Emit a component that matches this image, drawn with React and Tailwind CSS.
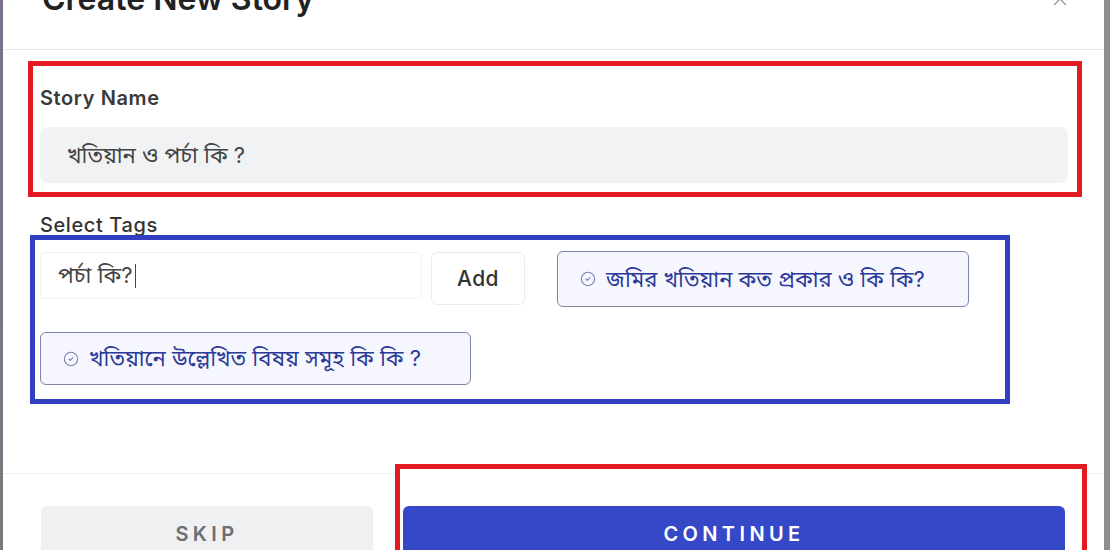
import { X, CircleCheck } from 'lucide-react';

const font = { fontFamily: 'Inter, "Noto Sans", "Noto Sans Bengali", sans-serif' };

function TagChip({ label, className }) {
    return (
        <div className={`flex items-center gap-[10px] pl-[22px] pr-3 border border-[#7c84aa] bg-[#f6f7fe] rounded-md ${className}`}>
            <CircleCheck size={16} strokeWidth={1.6} className="text-[#7880b0] shrink-0" />
            <span className="text-[22px] text-[#2b3a98] whitespace-nowrap">{label}</span>
        </div>
    );
}

export default function App() {
    return (
        <div className="w-[1110px] h-[550px] overflow-hidden flex bg-white" style={font}>
            {/* backdrop edge */}
            <div className="w-[3px] bg-gradient-to-b from-[#7b6f8c] to-[#7a7a7e] shrink-0" />

            <main className="flex-1 flex flex-col bg-white">
                {/* Header */}
                <header className="h-[50px] shrink-0 flex items-start justify-between border-b border-[#e8e9eb] pl-[39px] pr-[33px]">
                    <h1 className="-mt-[19px] text-[32px] leading-9 font-semibold text-[#222]">Create New Story</h1>
                    <X size={22} strokeWidth={1.5} className="-mt-[12px] text-[#9a9a9a]" />
                </header>

                {/* Body */}
                <div className="flex-1 flex flex-col pl-[25px] pr-[22px]">
                    {/* Story name */}
                    <section className="relative mt-[11px] border-[5px] border-[#e21b23] pl-[7px] pr-[9px] pt-[22px] pb-[9px]">
                        <label className="block text-[20px] leading-5 font-semibold tracking-[0.03em] text-[#3a3a3a]">Story Name</label>
                        <div className="mt-[19px] h-[56px] flex items-center pl-[27px] bg-[#f1f2f4] rounded-lg">
                            <span className="text-[22px] text-[#444]">খতিয়ান ও পর্চা কি ?</span>
                        </div>
                    </section>

                    {/* Tags */}
                    <label className="block mt-[18px] pl-[12px] text-[20px] leading-5 font-medium tracking-[0.03em] text-[#333]">Select Tags</label>
                    <section className="relative ml-[2px] w-[980px] border-[5px] border-[#3140c0] bg-white pl-[5px] pt-[12px] pb-[14px]">
                        <div className="flex flex-wrap items-start gap-x-8 gap-y-[25px]">
                            <div className="flex items-start gap-[9px]">
                                <div className="w-[382px] h-[47px] flex items-center pl-[17px] border border-[#f2f2f2] rounded-sm">
                                    <span className="text-[22px] text-[#444]">পর্চা কি?</span>
                                    <span className="ml-[3px] w-px h-[24px] bg-[#444]" />
                                </div>
                                <button className="w-[94px] h-[53px] border border-[#ececec] rounded-md text-[21px] font-medium tracking-[0.02em] text-[#333]">
                                    Add
                                </button>
                            </div>
                            <TagChip label="জমির খতিয়ান কত প্রকার ও কি কি?" className="w-[412px] h-[56px] -mt-px" />
                            <TagChip label="খতিয়ানে উল্লেখিত বিষয় সমূহ কি কি ?" className="w-[431px] h-[53px]" />
                        </div>
                    </section>
                </div>

                {/* Footer */}
                <footer className="h-[77px] shrink-0 flex items-start gap-[22px] border-t border-[#eeeff1] pl-[38px]">
                    <button className="mt-8 w-[332px] h-[56px] shrink-0 bg-[#eef0f2] rounded-md text-[20px] font-semibold tracking-[0.22em] text-[#6b6e73]">
                        SKIP
                    </button>
                    <div className="relative -mt-[10px] w-[692px] h-[100px] shrink-0 border-[5px] border-[#e21b23] bg-white pt-[37px] pl-[3px] pr-[17px]">
                        <button className="w-full h-[56px] bg-[#3548c7] rounded-md text-[20px] font-semibold tracking-[0.22em] text-white">
                            CONTINUE
                        </button>
                    </div>
                </footer>
            </main>

            <div className="w-[6px] bg-[#8e8e8e] shrink-0" />
        </div>
    );
}
